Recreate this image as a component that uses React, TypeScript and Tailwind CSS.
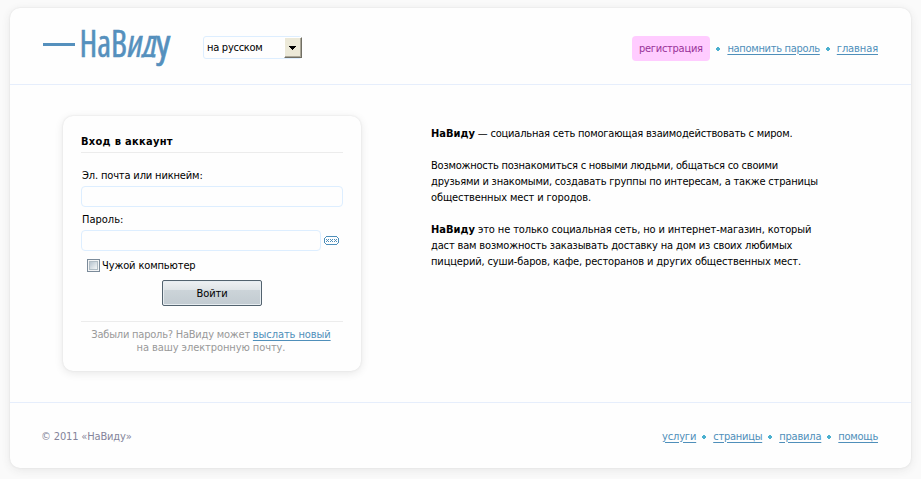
import React from "react";

const Dot = ({ className = "" }: { className?: string }) => (
  <svg width="4" height="4" viewBox="0 0 4 4" className={`shrink-0 ${className}`} shapeRendering="crispEdges">
    <path d="M1 0h2v1h1v2h-1v1h-2v-1h-1v-2h1z" fill="#4bb0cf" />
  </svg>
);

const Link = ({ children, className = "" }: { children: React.ReactNode; className?: string }) => (
  <a href="#" className={`whitespace-nowrap text-[#4f8fba] underline decoration-1 underline-offset-2 ${className}`}>
    {children}
  </a>
);

const Logo = () => (
  <svg width="130" height="44" viewBox="0 0 130 44" className="block shrink-0 overflow-visible" fill="#5590bd" stroke="#5590bd" strokeWidth="0.6" fontFamily="'Open Sans', sans-serif" fontSize="39">
    <clipPath id="baseline"><rect x="80" y="0" width="40" height="30.5" /></clipPath>
    <rect x="1" y="16" width="32" height="3" stroke="none" />
    <text x="37.5" y="30" textLength="47.5" lengthAdjust="spacingAndGlyphs">НаВ</text>
    <g clipPath="url(#baseline)">
      <text transform="translate(83.5 30) skewX(-10)" textLength="30" lengthAdjust="spacingAndGlyphs">ид</text>
    </g>
    <text x="114" y="30" textLength="14.5" lengthAdjust="spacingAndGlyphs">у</text>
  </svg>
);

const Language = () => (
  <div className="flex h-[23px] w-[99px] items-center rounded-[3px] border border-[#ddeeff] pl-[3px] text-black">
    <span className="grow whitespace-nowrap pt-px tracking-[-0.27px]">на русском</span>
    <span className="-mr-px flex h-[21px] w-[18px] shrink-0 items-center justify-center border border-t-white border-l-white border-r-[#716f64] border-b-[#716f64] bg-[#ece9d8] shadow-[inset_-1px_-1px_0_#aca899]">
      <svg className="-ml-px" width="7" height="4" viewBox="0 0 7 4" shapeRendering="crispEdges"><path d="M0 0h7v1h-1v1h-1v1h-1v1h-1v-1h-1v-1h-1v-1h-1z" /></svg>
    </span>
  </div>
);

const HiddenPassword = () => (
  <svg width="15" height="9" viewBox="0 0 15 9" fill="none" stroke="#4f8fba" shapeRendering="crispEdges">
    <path d="M2 .5h11M2 8.5h11M.5 2v5M14.5 2v5M1 1.5h1M13 1.5h1M1 7.5h1M13 7.5h1" />
    <path d="M2 3.5h1m1 0h1m1 0h1m1 0h1m1 0h1m1 0h1M3 4.5h1m3 0h1m3 0h1M2 5.5h1m1 0h1m1 0h1m1 0h1m1 0h1m1 0h1" />
  </svg>
);

export default function App() {
  return (
    <div className="h-[479px] w-[921px] overflow-hidden bg-[#fafafa] px-[10px] pt-[8px] font-['DejaVu_Sans_Condensed','DejaVu_Sans',sans-serif] text-[11px] leading-[16px] text-black [font-stretch:condensed]">
      <div className="flex h-[460px] w-[901px] flex-col rounded-[10px] bg-[#fefefe] shadow-[0_0_2px_#ddd,0_2px_10px_#e7e7e7]">
        <header className="flex h-[77px] shrink-0 border-b border-[#e6eefc] pl-[32px] pr-[33px]">
          <div className="pt-[19px]"><Logo /></div>
          <div className="ml-[31px] pt-[28px]"><Language /></div>
          <nav className="mt-[28px] ml-auto flex h-[25px] items-center self-start">
            <a href="#" className="flex h-[25px] w-[78px] items-center justify-center rounded-[4px] bg-[#ffccff] pr-px tracking-[-0.27px] text-[#993399]">регистрация</a>
            <Dot className="mr-[7px] ml-[6px]" />
            <Link className="tracking-[-0.3px]">напомнить пароль</Link>
            <Dot className="mr-[7px] ml-[6px]" />
            <Link className="tracking-[-0.1px]">главная</Link>
          </nav>
        </header>
        <main className="flex h-[317px] shrink-0 pl-[53px]">
          <form className="mt-[31px] flex h-[255px] w-[298px] flex-col rounded-[10px] bg-[#fefefe] px-[18px] shadow-[0_0_2px_#ddd,0_2px_10px_#e7e7e7]">
            <h1 className="h-[37px] border-b border-[#ececec] pt-[18px] font-bold tracking-[0.3px]">Вход в аккаунт</h1>
            <label className="mt-[15px] pl-px tracking-[-0.15px]">Эл. почта или никнейм:</label>
            <input className="mt-[2px] h-[21px] w-[262px] shrink-0 rounded-[4px] border border-[#ddeeff] bg-[#fefefe]" />
            <label className="mt-[5px] pl-px">Пароль:</label>
            <div className="mt-[2px] flex items-center gap-[3px]">
              <input type="password" className="h-[21px] w-[240px] rounded-[4px] border border-[#ddeeff] bg-[#fefefe]" />
              <HiddenPassword />
            </div>
            <label className="mt-[6px] flex items-center pl-[6px]">
              <span className="flex size-[13px] items-center justify-center border border-[#7b8b9a] bg-[#f4f5f6]">
                <span className="size-[9px] border border-[#b1bdc5] bg-linear-to-br from-[#b8c5cf] to-[#f5f7f8]" />
              </span>
              <span className="-mb-px ml-[2px] pt-px tracking-[-0.13px]">Чужой компьютер</span>
            </label>
            <button type="button" className="mt-[7px] h-[26px] w-[100px] shrink-0 self-center rounded-[2px] border border-[#53636f] bg-linear-[#eef1f3_0%,#dfe4e7_38%,#ccd4d9_39%,#c2cbd1_100%] pt-[2px] tracking-[-0.1px] shadow-[inset_0_0_0_1px_#e7edf1]">Войти</button>
            <p className="mt-[15px] border-t border-[#ececec] pt-[6px] pr-[2px] text-center leading-[13px] text-[#999]">
              <span className="tracking-[-0.22px]">Забыли пароль? НаВиду может </span><Link className="tracking-[-0.08px]">выслать новый</Link><br />
              <span className="tracking-[-0.08px]">на вашу электронную почту.</span>
            </p>
          </form>
          <section className="mt-[41px] ml-[70px] whitespace-nowrap">
            <p><b>НаВиду</b><span className="tracking-[-0.2px]"> — социальная сеть помогающая взаимодействовать с миром.</span></p>
            <p className="mt-[16px]">
              <span className="tracking-[-0.23px]">Возможность познакомиться с новыми людьми, общаться со своими</span><br />
              <span className="tracking-[-0.186px]">друзьями и знакомыми, создавать группы по интересам, а также страницы</span><br />
              <span className="tracking-[-0.12px]">общественных мест и городов.</span>
            </p>
            <p className="mt-[16px]">
              <b>НаВиду</b><span className="tracking-[-0.125px]"> это не только социальная сеть, но и интернет-магазин, который</span><br />
              <span className="tracking-[-0.155px]">даст вам возможность заказывать доставку на дом из своих любимых</span><br />
              <span className="tracking-[-0.134px]">пиццерий, суши-баров, кафе, ресторанов и других общественных мест.</span>
            </p>
          </section>
        </main>
        <footer className="flex h-[66px] items-center border-t border-[#e6eefc] pt-[2px] pr-[33px] pl-[31px]">
          <span className="tracking-[-0.15px] text-[#84849a]">© 2011 «НаВиду»</span>
          <nav className="ml-auto flex items-center">
            <Link className="tracking-[-0.15px]">услуги</Link>
            <Dot className="mr-[7px] ml-[6px]" />
            <Link className="tracking-[-0.25px]">страницы</Link>
            <Dot className="mr-[7px] ml-[6px]" />
            <Link className="tracking-[-0.2px]">правила</Link>
            <Dot className="mr-[7px] ml-[6px]" />
            <Link className="tracking-[-0.25px]">помощь</Link>
          </nav>
        </footer>
      </div>
    </div>
  );
}
